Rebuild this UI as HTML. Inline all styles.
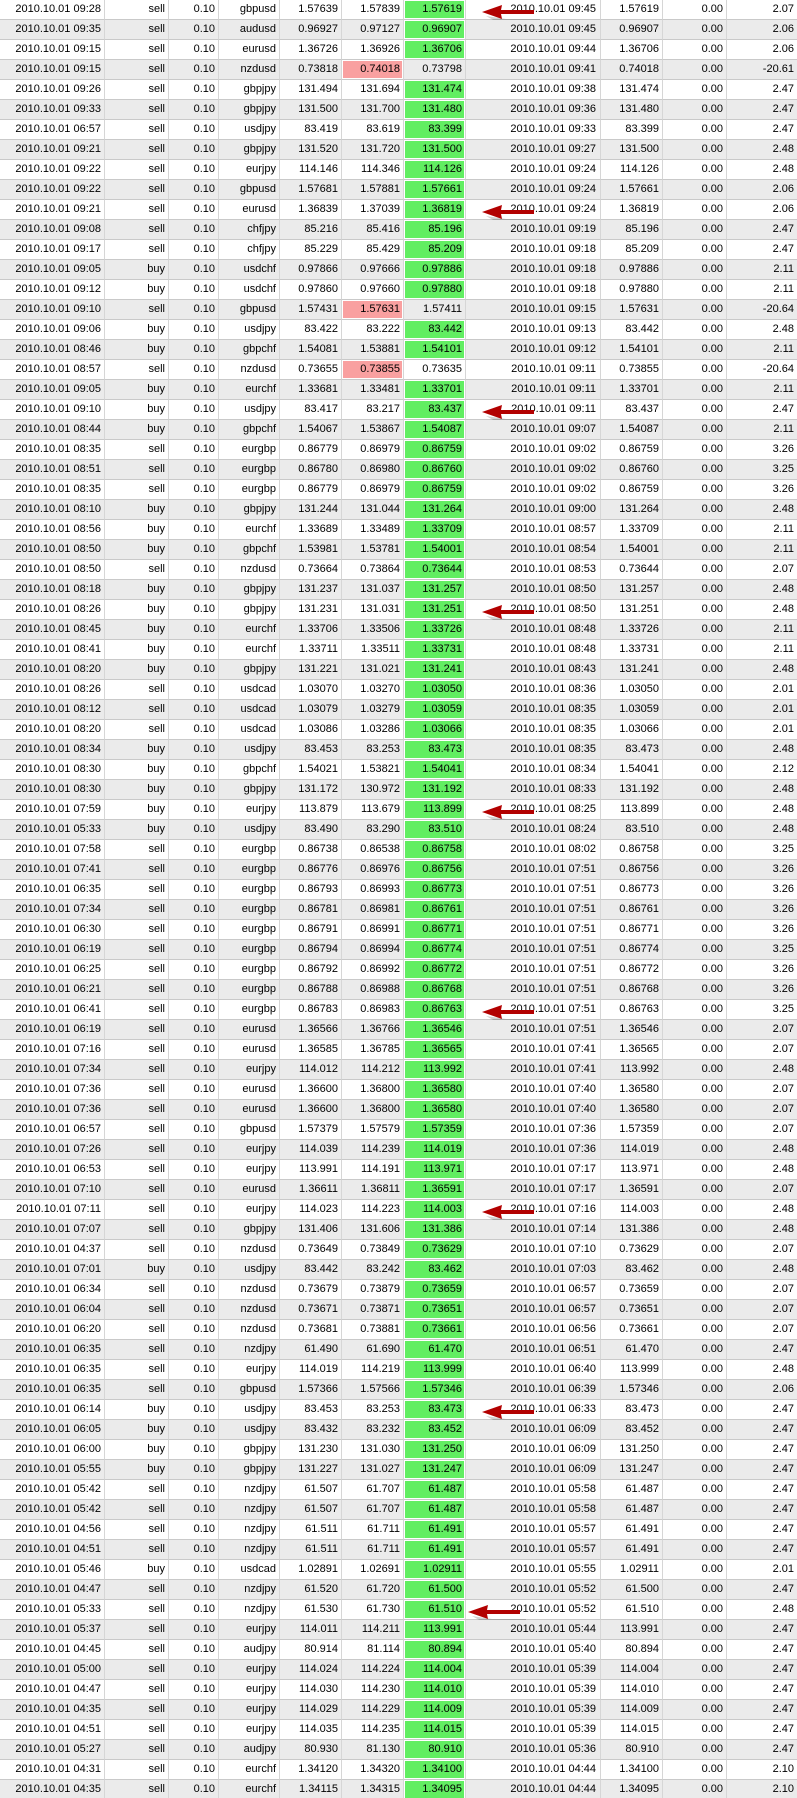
<!DOCTYPE html>
<html><head><meta charset="utf-8"><style>
html,body{margin:0;padding:0;background:#fff;width:797px;height:1798px;overflow:hidden;position:relative}
table{border-collapse:separate;border-spacing:0;table-layout:fixed;width:797px;font-family:"Liberation Sans",sans-serif;font-size:11px;color:#000}
td{height:19px;padding:0 3px 0 0;border-bottom:1px solid #c9c9c9;border-right:1px solid #d6d6d6;text-align:right;white-space:nowrap;overflow:hidden;line-height:19px}
td:last-child{border-right:none}
tr:nth-child(even) td{background:#ebebeb}
tr td.g{background:#61ee61 !important;box-shadow:inset 0 0 0 1px #fff}
tr td.r{background:#f9a0a0 !important;box-shadow:inset 0 0 0 1px #fff}
td:nth-child(8){padding-right:4px}
.a{position:absolute;left:476px;width:66px;height:16px}
</style></head><body>
<table>
<colgroup><col style="width:105px"><col style="width:64px"><col style="width:50px"><col style="width:61px"><col style="width:62px"><col style="width:62px"><col style="width:62px"><col style="width:135px"><col style="width:62px"><col style="width:64px"><col style="width:70px"></colgroup>
<tr><td>2010.10.01 09:28</td><td>sell</td><td>0.10</td><td>gbpusd</td><td>1.57639</td><td>1.57839</td><td class="g">1.57619</td><td>2010.10.01 09:45</td><td>1.57619</td><td>0.00</td><td>2.07</td></tr>
<tr><td>2010.10.01 09:35</td><td>sell</td><td>0.10</td><td>audusd</td><td>0.96927</td><td>0.97127</td><td class="g">0.96907</td><td>2010.10.01 09:45</td><td>0.96907</td><td>0.00</td><td>2.06</td></tr>
<tr><td>2010.10.01 09:15</td><td>sell</td><td>0.10</td><td>eurusd</td><td>1.36726</td><td>1.36926</td><td class="g">1.36706</td><td>2010.10.01 09:44</td><td>1.36706</td><td>0.00</td><td>2.06</td></tr>
<tr><td>2010.10.01 09:15</td><td>sell</td><td>0.10</td><td>nzdusd</td><td>0.73818</td><td class="r">0.74018</td><td>0.73798</td><td>2010.10.01 09:41</td><td>0.74018</td><td>0.00</td><td>-20.61</td></tr>
<tr><td>2010.10.01 09:26</td><td>sell</td><td>0.10</td><td>gbpjpy</td><td>131.494</td><td>131.694</td><td class="g">131.474</td><td>2010.10.01 09:38</td><td>131.474</td><td>0.00</td><td>2.47</td></tr>
<tr><td>2010.10.01 09:33</td><td>sell</td><td>0.10</td><td>gbpjpy</td><td>131.500</td><td>131.700</td><td class="g">131.480</td><td>2010.10.01 09:36</td><td>131.480</td><td>0.00</td><td>2.47</td></tr>
<tr><td>2010.10.01 06:57</td><td>sell</td><td>0.10</td><td>usdjpy</td><td>83.419</td><td>83.619</td><td class="g">83.399</td><td>2010.10.01 09:33</td><td>83.399</td><td>0.00</td><td>2.47</td></tr>
<tr><td>2010.10.01 09:21</td><td>sell</td><td>0.10</td><td>gbpjpy</td><td>131.520</td><td>131.720</td><td class="g">131.500</td><td>2010.10.01 09:27</td><td>131.500</td><td>0.00</td><td>2.48</td></tr>
<tr><td>2010.10.01 09:22</td><td>sell</td><td>0.10</td><td>eurjpy</td><td>114.146</td><td>114.346</td><td class="g">114.126</td><td>2010.10.01 09:24</td><td>114.126</td><td>0.00</td><td>2.48</td></tr>
<tr><td>2010.10.01 09:22</td><td>sell</td><td>0.10</td><td>gbpusd</td><td>1.57681</td><td>1.57881</td><td class="g">1.57661</td><td>2010.10.01 09:24</td><td>1.57661</td><td>0.00</td><td>2.06</td></tr>
<tr><td>2010.10.01 09:21</td><td>sell</td><td>0.10</td><td>eurusd</td><td>1.36839</td><td>1.37039</td><td class="g">1.36819</td><td>2010.10.01 09:24</td><td>1.36819</td><td>0.00</td><td>2.06</td></tr>
<tr><td>2010.10.01 09:08</td><td>sell</td><td>0.10</td><td>chfjpy</td><td>85.216</td><td>85.416</td><td class="g">85.196</td><td>2010.10.01 09:19</td><td>85.196</td><td>0.00</td><td>2.47</td></tr>
<tr><td>2010.10.01 09:17</td><td>sell</td><td>0.10</td><td>chfjpy</td><td>85.229</td><td>85.429</td><td class="g">85.209</td><td>2010.10.01 09:18</td><td>85.209</td><td>0.00</td><td>2.47</td></tr>
<tr><td>2010.10.01 09:05</td><td>buy</td><td>0.10</td><td>usdchf</td><td>0.97866</td><td>0.97666</td><td class="g">0.97886</td><td>2010.10.01 09:18</td><td>0.97886</td><td>0.00</td><td>2.11</td></tr>
<tr><td>2010.10.01 09:12</td><td>buy</td><td>0.10</td><td>usdchf</td><td>0.97860</td><td>0.97660</td><td class="g">0.97880</td><td>2010.10.01 09:18</td><td>0.97880</td><td>0.00</td><td>2.11</td></tr>
<tr><td>2010.10.01 09:10</td><td>sell</td><td>0.10</td><td>gbpusd</td><td>1.57431</td><td class="r">1.57631</td><td>1.57411</td><td>2010.10.01 09:15</td><td>1.57631</td><td>0.00</td><td>-20.64</td></tr>
<tr><td>2010.10.01 09:06</td><td>buy</td><td>0.10</td><td>usdjpy</td><td>83.422</td><td>83.222</td><td class="g">83.442</td><td>2010.10.01 09:13</td><td>83.442</td><td>0.00</td><td>2.48</td></tr>
<tr><td>2010.10.01 08:46</td><td>buy</td><td>0.10</td><td>gbpchf</td><td>1.54081</td><td>1.53881</td><td class="g">1.54101</td><td>2010.10.01 09:12</td><td>1.54101</td><td>0.00</td><td>2.11</td></tr>
<tr><td>2010.10.01 08:57</td><td>sell</td><td>0.10</td><td>nzdusd</td><td>0.73655</td><td class="r">0.73855</td><td>0.73635</td><td>2010.10.01 09:11</td><td>0.73855</td><td>0.00</td><td>-20.64</td></tr>
<tr><td>2010.10.01 09:05</td><td>buy</td><td>0.10</td><td>eurchf</td><td>1.33681</td><td>1.33481</td><td class="g">1.33701</td><td>2010.10.01 09:11</td><td>1.33701</td><td>0.00</td><td>2.11</td></tr>
<tr><td>2010.10.01 09:10</td><td>buy</td><td>0.10</td><td>usdjpy</td><td>83.417</td><td>83.217</td><td class="g">83.437</td><td>2010.10.01 09:11</td><td>83.437</td><td>0.00</td><td>2.47</td></tr>
<tr><td>2010.10.01 08:44</td><td>buy</td><td>0.10</td><td>gbpchf</td><td>1.54067</td><td>1.53867</td><td class="g">1.54087</td><td>2010.10.01 09:07</td><td>1.54087</td><td>0.00</td><td>2.11</td></tr>
<tr><td>2010.10.01 08:35</td><td>sell</td><td>0.10</td><td>eurgbp</td><td>0.86779</td><td>0.86979</td><td class="g">0.86759</td><td>2010.10.01 09:02</td><td>0.86759</td><td>0.00</td><td>3.26</td></tr>
<tr><td>2010.10.01 08:51</td><td>sell</td><td>0.10</td><td>eurgbp</td><td>0.86780</td><td>0.86980</td><td class="g">0.86760</td><td>2010.10.01 09:02</td><td>0.86760</td><td>0.00</td><td>3.25</td></tr>
<tr><td>2010.10.01 08:35</td><td>sell</td><td>0.10</td><td>eurgbp</td><td>0.86779</td><td>0.86979</td><td class="g">0.86759</td><td>2010.10.01 09:02</td><td>0.86759</td><td>0.00</td><td>3.26</td></tr>
<tr><td>2010.10.01 08:10</td><td>buy</td><td>0.10</td><td>gbpjpy</td><td>131.244</td><td>131.044</td><td class="g">131.264</td><td>2010.10.01 09:00</td><td>131.264</td><td>0.00</td><td>2.48</td></tr>
<tr><td>2010.10.01 08:56</td><td>buy</td><td>0.10</td><td>eurchf</td><td>1.33689</td><td>1.33489</td><td class="g">1.33709</td><td>2010.10.01 08:57</td><td>1.33709</td><td>0.00</td><td>2.11</td></tr>
<tr><td>2010.10.01 08:50</td><td>buy</td><td>0.10</td><td>gbpchf</td><td>1.53981</td><td>1.53781</td><td class="g">1.54001</td><td>2010.10.01 08:54</td><td>1.54001</td><td>0.00</td><td>2.11</td></tr>
<tr><td>2010.10.01 08:50</td><td>sell</td><td>0.10</td><td>nzdusd</td><td>0.73664</td><td>0.73864</td><td class="g">0.73644</td><td>2010.10.01 08:53</td><td>0.73644</td><td>0.00</td><td>2.07</td></tr>
<tr><td>2010.10.01 08:18</td><td>buy</td><td>0.10</td><td>gbpjpy</td><td>131.237</td><td>131.037</td><td class="g">131.257</td><td>2010.10.01 08:50</td><td>131.257</td><td>0.00</td><td>2.48</td></tr>
<tr><td>2010.10.01 08:26</td><td>buy</td><td>0.10</td><td>gbpjpy</td><td>131.231</td><td>131.031</td><td class="g">131.251</td><td>2010.10.01 08:50</td><td>131.251</td><td>0.00</td><td>2.48</td></tr>
<tr><td>2010.10.01 08:45</td><td>buy</td><td>0.10</td><td>eurchf</td><td>1.33706</td><td>1.33506</td><td class="g">1.33726</td><td>2010.10.01 08:48</td><td>1.33726</td><td>0.00</td><td>2.11</td></tr>
<tr><td>2010.10.01 08:41</td><td>buy</td><td>0.10</td><td>eurchf</td><td>1.33711</td><td>1.33511</td><td class="g">1.33731</td><td>2010.10.01 08:48</td><td>1.33731</td><td>0.00</td><td>2.11</td></tr>
<tr><td>2010.10.01 08:20</td><td>buy</td><td>0.10</td><td>gbpjpy</td><td>131.221</td><td>131.021</td><td class="g">131.241</td><td>2010.10.01 08:43</td><td>131.241</td><td>0.00</td><td>2.48</td></tr>
<tr><td>2010.10.01 08:26</td><td>sell</td><td>0.10</td><td>usdcad</td><td>1.03070</td><td>1.03270</td><td class="g">1.03050</td><td>2010.10.01 08:36</td><td>1.03050</td><td>0.00</td><td>2.01</td></tr>
<tr><td>2010.10.01 08:12</td><td>sell</td><td>0.10</td><td>usdcad</td><td>1.03079</td><td>1.03279</td><td class="g">1.03059</td><td>2010.10.01 08:35</td><td>1.03059</td><td>0.00</td><td>2.01</td></tr>
<tr><td>2010.10.01 08:20</td><td>sell</td><td>0.10</td><td>usdcad</td><td>1.03086</td><td>1.03286</td><td class="g">1.03066</td><td>2010.10.01 08:35</td><td>1.03066</td><td>0.00</td><td>2.01</td></tr>
<tr><td>2010.10.01 08:34</td><td>buy</td><td>0.10</td><td>usdjpy</td><td>83.453</td><td>83.253</td><td class="g">83.473</td><td>2010.10.01 08:35</td><td>83.473</td><td>0.00</td><td>2.48</td></tr>
<tr><td>2010.10.01 08:30</td><td>buy</td><td>0.10</td><td>gbpchf</td><td>1.54021</td><td>1.53821</td><td class="g">1.54041</td><td>2010.10.01 08:34</td><td>1.54041</td><td>0.00</td><td>2.12</td></tr>
<tr><td>2010.10.01 08:30</td><td>buy</td><td>0.10</td><td>gbpjpy</td><td>131.172</td><td>130.972</td><td class="g">131.192</td><td>2010.10.01 08:33</td><td>131.192</td><td>0.00</td><td>2.48</td></tr>
<tr><td>2010.10.01 07:59</td><td>buy</td><td>0.10</td><td>eurjpy</td><td>113.879</td><td>113.679</td><td class="g">113.899</td><td>2010.10.01 08:25</td><td>113.899</td><td>0.00</td><td>2.48</td></tr>
<tr><td>2010.10.01 05:33</td><td>buy</td><td>0.10</td><td>usdjpy</td><td>83.490</td><td>83.290</td><td class="g">83.510</td><td>2010.10.01 08:24</td><td>83.510</td><td>0.00</td><td>2.48</td></tr>
<tr><td>2010.10.01 07:58</td><td>sell</td><td>0.10</td><td>eurgbp</td><td>0.86738</td><td>0.86538</td><td class="g">0.86758</td><td>2010.10.01 08:02</td><td>0.86758</td><td>0.00</td><td>3.25</td></tr>
<tr><td>2010.10.01 07:41</td><td>sell</td><td>0.10</td><td>eurgbp</td><td>0.86776</td><td>0.86976</td><td class="g">0.86756</td><td>2010.10.01 07:51</td><td>0.86756</td><td>0.00</td><td>3.26</td></tr>
<tr><td>2010.10.01 06:35</td><td>sell</td><td>0.10</td><td>eurgbp</td><td>0.86793</td><td>0.86993</td><td class="g">0.86773</td><td>2010.10.01 07:51</td><td>0.86773</td><td>0.00</td><td>3.26</td></tr>
<tr><td>2010.10.01 07:34</td><td>sell</td><td>0.10</td><td>eurgbp</td><td>0.86781</td><td>0.86981</td><td class="g">0.86761</td><td>2010.10.01 07:51</td><td>0.86761</td><td>0.00</td><td>3.26</td></tr>
<tr><td>2010.10.01 06:30</td><td>sell</td><td>0.10</td><td>eurgbp</td><td>0.86791</td><td>0.86991</td><td class="g">0.86771</td><td>2010.10.01 07:51</td><td>0.86771</td><td>0.00</td><td>3.26</td></tr>
<tr><td>2010.10.01 06:19</td><td>sell</td><td>0.10</td><td>eurgbp</td><td>0.86794</td><td>0.86994</td><td class="g">0.86774</td><td>2010.10.01 07:51</td><td>0.86774</td><td>0.00</td><td>3.25</td></tr>
<tr><td>2010.10.01 06:25</td><td>sell</td><td>0.10</td><td>eurgbp</td><td>0.86792</td><td>0.86992</td><td class="g">0.86772</td><td>2010.10.01 07:51</td><td>0.86772</td><td>0.00</td><td>3.26</td></tr>
<tr><td>2010.10.01 06:21</td><td>sell</td><td>0.10</td><td>eurgbp</td><td>0.86788</td><td>0.86988</td><td class="g">0.86768</td><td>2010.10.01 07:51</td><td>0.86768</td><td>0.00</td><td>3.26</td></tr>
<tr><td>2010.10.01 06:41</td><td>sell</td><td>0.10</td><td>eurgbp</td><td>0.86783</td><td>0.86983</td><td class="g">0.86763</td><td>2010.10.01 07:51</td><td>0.86763</td><td>0.00</td><td>3.25</td></tr>
<tr><td>2010.10.01 06:19</td><td>sell</td><td>0.10</td><td>eurusd</td><td>1.36566</td><td>1.36766</td><td class="g">1.36546</td><td>2010.10.01 07:51</td><td>1.36546</td><td>0.00</td><td>2.07</td></tr>
<tr><td>2010.10.01 07:16</td><td>sell</td><td>0.10</td><td>eurusd</td><td>1.36585</td><td>1.36785</td><td class="g">1.36565</td><td>2010.10.01 07:41</td><td>1.36565</td><td>0.00</td><td>2.07</td></tr>
<tr><td>2010.10.01 07:34</td><td>sell</td><td>0.10</td><td>eurjpy</td><td>114.012</td><td>114.212</td><td class="g">113.992</td><td>2010.10.01 07:41</td><td>113.992</td><td>0.00</td><td>2.48</td></tr>
<tr><td>2010.10.01 07:36</td><td>sell</td><td>0.10</td><td>eurusd</td><td>1.36600</td><td>1.36800</td><td class="g">1.36580</td><td>2010.10.01 07:40</td><td>1.36580</td><td>0.00</td><td>2.07</td></tr>
<tr><td>2010.10.01 07:36</td><td>sell</td><td>0.10</td><td>eurusd</td><td>1.36600</td><td>1.36800</td><td class="g">1.36580</td><td>2010.10.01 07:40</td><td>1.36580</td><td>0.00</td><td>2.07</td></tr>
<tr><td>2010.10.01 06:57</td><td>sell</td><td>0.10</td><td>gbpusd</td><td>1.57379</td><td>1.57579</td><td class="g">1.57359</td><td>2010.10.01 07:36</td><td>1.57359</td><td>0.00</td><td>2.07</td></tr>
<tr><td>2010.10.01 07:26</td><td>sell</td><td>0.10</td><td>eurjpy</td><td>114.039</td><td>114.239</td><td class="g">114.019</td><td>2010.10.01 07:36</td><td>114.019</td><td>0.00</td><td>2.48</td></tr>
<tr><td>2010.10.01 06:53</td><td>sell</td><td>0.10</td><td>eurjpy</td><td>113.991</td><td>114.191</td><td class="g">113.971</td><td>2010.10.01 07:17</td><td>113.971</td><td>0.00</td><td>2.48</td></tr>
<tr><td>2010.10.01 07:10</td><td>sell</td><td>0.10</td><td>eurusd</td><td>1.36611</td><td>1.36811</td><td class="g">1.36591</td><td>2010.10.01 07:17</td><td>1.36591</td><td>0.00</td><td>2.07</td></tr>
<tr><td>2010.10.01 07:11</td><td>sell</td><td>0.10</td><td>eurjpy</td><td>114.023</td><td>114.223</td><td class="g">114.003</td><td>2010.10.01 07:16</td><td>114.003</td><td>0.00</td><td>2.48</td></tr>
<tr><td>2010.10.01 07:07</td><td>sell</td><td>0.10</td><td>gbpjpy</td><td>131.406</td><td>131.606</td><td class="g">131.386</td><td>2010.10.01 07:14</td><td>131.386</td><td>0.00</td><td>2.48</td></tr>
<tr><td>2010.10.01 04:37</td><td>sell</td><td>0.10</td><td>nzdusd</td><td>0.73649</td><td>0.73849</td><td class="g">0.73629</td><td>2010.10.01 07:10</td><td>0.73629</td><td>0.00</td><td>2.07</td></tr>
<tr><td>2010.10.01 07:01</td><td>buy</td><td>0.10</td><td>usdjpy</td><td>83.442</td><td>83.242</td><td class="g">83.462</td><td>2010.10.01 07:03</td><td>83.462</td><td>0.00</td><td>2.48</td></tr>
<tr><td>2010.10.01 06:34</td><td>sell</td><td>0.10</td><td>nzdusd</td><td>0.73679</td><td>0.73879</td><td class="g">0.73659</td><td>2010.10.01 06:57</td><td>0.73659</td><td>0.00</td><td>2.07</td></tr>
<tr><td>2010.10.01 06:04</td><td>sell</td><td>0.10</td><td>nzdusd</td><td>0.73671</td><td>0.73871</td><td class="g">0.73651</td><td>2010.10.01 06:57</td><td>0.73651</td><td>0.00</td><td>2.07</td></tr>
<tr><td>2010.10.01 06:20</td><td>sell</td><td>0.10</td><td>nzdusd</td><td>0.73681</td><td>0.73881</td><td class="g">0.73661</td><td>2010.10.01 06:56</td><td>0.73661</td><td>0.00</td><td>2.07</td></tr>
<tr><td>2010.10.01 06:35</td><td>sell</td><td>0.10</td><td>nzdjpy</td><td>61.490</td><td>61.690</td><td class="g">61.470</td><td>2010.10.01 06:51</td><td>61.470</td><td>0.00</td><td>2.47</td></tr>
<tr><td>2010.10.01 06:35</td><td>sell</td><td>0.10</td><td>eurjpy</td><td>114.019</td><td>114.219</td><td class="g">113.999</td><td>2010.10.01 06:40</td><td>113.999</td><td>0.00</td><td>2.48</td></tr>
<tr><td>2010.10.01 06:35</td><td>sell</td><td>0.10</td><td>gbpusd</td><td>1.57366</td><td>1.57566</td><td class="g">1.57346</td><td>2010.10.01 06:39</td><td>1.57346</td><td>0.00</td><td>2.06</td></tr>
<tr><td>2010.10.01 06:14</td><td>buy</td><td>0.10</td><td>usdjpy</td><td>83.453</td><td>83.253</td><td class="g">83.473</td><td>2010.10.01 06:33</td><td>83.473</td><td>0.00</td><td>2.47</td></tr>
<tr><td>2010.10.01 06:05</td><td>buy</td><td>0.10</td><td>usdjpy</td><td>83.432</td><td>83.232</td><td class="g">83.452</td><td>2010.10.01 06:09</td><td>83.452</td><td>0.00</td><td>2.47</td></tr>
<tr><td>2010.10.01 06:00</td><td>buy</td><td>0.10</td><td>gbpjpy</td><td>131.230</td><td>131.030</td><td class="g">131.250</td><td>2010.10.01 06:09</td><td>131.250</td><td>0.00</td><td>2.47</td></tr>
<tr><td>2010.10.01 05:55</td><td>buy</td><td>0.10</td><td>gbpjpy</td><td>131.227</td><td>131.027</td><td class="g">131.247</td><td>2010.10.01 06:09</td><td>131.247</td><td>0.00</td><td>2.47</td></tr>
<tr><td>2010.10.01 05:42</td><td>sell</td><td>0.10</td><td>nzdjpy</td><td>61.507</td><td>61.707</td><td class="g">61.487</td><td>2010.10.01 05:58</td><td>61.487</td><td>0.00</td><td>2.47</td></tr>
<tr><td>2010.10.01 05:42</td><td>sell</td><td>0.10</td><td>nzdjpy</td><td>61.507</td><td>61.707</td><td class="g">61.487</td><td>2010.10.01 05:58</td><td>61.487</td><td>0.00</td><td>2.47</td></tr>
<tr><td>2010.10.01 04:56</td><td>sell</td><td>0.10</td><td>nzdjpy</td><td>61.511</td><td>61.711</td><td class="g">61.491</td><td>2010.10.01 05:57</td><td>61.491</td><td>0.00</td><td>2.47</td></tr>
<tr><td>2010.10.01 04:51</td><td>sell</td><td>0.10</td><td>nzdjpy</td><td>61.511</td><td>61.711</td><td class="g">61.491</td><td>2010.10.01 05:57</td><td>61.491</td><td>0.00</td><td>2.47</td></tr>
<tr><td>2010.10.01 05:46</td><td>buy</td><td>0.10</td><td>usdcad</td><td>1.02891</td><td>1.02691</td><td class="g">1.02911</td><td>2010.10.01 05:55</td><td>1.02911</td><td>0.00</td><td>2.01</td></tr>
<tr><td>2010.10.01 04:47</td><td>sell</td><td>0.10</td><td>nzdjpy</td><td>61.520</td><td>61.720</td><td class="g">61.500</td><td>2010.10.01 05:52</td><td>61.500</td><td>0.00</td><td>2.47</td></tr>
<tr><td>2010.10.01 05:33</td><td>sell</td><td>0.10</td><td>nzdjpy</td><td>61.530</td><td>61.730</td><td class="g">61.510</td><td>2010.10.01 05:52</td><td>61.510</td><td>0.00</td><td>2.48</td></tr>
<tr><td>2010.10.01 05:37</td><td>sell</td><td>0.10</td><td>eurjpy</td><td>114.011</td><td>114.211</td><td class="g">113.991</td><td>2010.10.01 05:44</td><td>113.991</td><td>0.00</td><td>2.47</td></tr>
<tr><td>2010.10.01 04:45</td><td>sell</td><td>0.10</td><td>audjpy</td><td>80.914</td><td>81.114</td><td class="g">80.894</td><td>2010.10.01 05:40</td><td>80.894</td><td>0.00</td><td>2.47</td></tr>
<tr><td>2010.10.01 05:00</td><td>sell</td><td>0.10</td><td>eurjpy</td><td>114.024</td><td>114.224</td><td class="g">114.004</td><td>2010.10.01 05:39</td><td>114.004</td><td>0.00</td><td>2.47</td></tr>
<tr><td>2010.10.01 04:47</td><td>sell</td><td>0.10</td><td>eurjpy</td><td>114.030</td><td>114.230</td><td class="g">114.010</td><td>2010.10.01 05:39</td><td>114.010</td><td>0.00</td><td>2.47</td></tr>
<tr><td>2010.10.01 04:35</td><td>sell</td><td>0.10</td><td>eurjpy</td><td>114.029</td><td>114.229</td><td class="g">114.009</td><td>2010.10.01 05:39</td><td>114.009</td><td>0.00</td><td>2.47</td></tr>
<tr><td>2010.10.01 04:51</td><td>sell</td><td>0.10</td><td>eurjpy</td><td>114.035</td><td>114.235</td><td class="g">114.015</td><td>2010.10.01 05:39</td><td>114.015</td><td>0.00</td><td>2.47</td></tr>
<tr><td>2010.10.01 05:27</td><td>sell</td><td>0.10</td><td>audjpy</td><td>80.930</td><td>81.130</td><td class="g">80.910</td><td>2010.10.01 05:36</td><td>80.910</td><td>0.00</td><td>2.47</td></tr>
<tr><td>2010.10.01 04:31</td><td>sell</td><td>0.10</td><td>eurchf</td><td>1.34120</td><td>1.34320</td><td class="g">1.34100</td><td>2010.10.01 04:44</td><td>1.34100</td><td>0.00</td><td>2.10</td></tr>
<tr><td>2010.10.01 04:35</td><td>sell</td><td>0.10</td><td>eurchf</td><td>1.34115</td><td>1.34315</td><td class="g">1.34095</td><td>2010.10.01 04:44</td><td>1.34095</td><td>0.00</td><td>2.10</td></tr>
</table>
<svg width="0" height="0" style="position:absolute"><defs><g id="ar"><path d="M8 10 L28 13 L62 13 L62 18 L28 18 L26 20 Z" fill="#000" opacity=".18" transform="translate(2,2)"/><path d="M6 8 L26 1 L25 6 L58 6 L58 10 L25 10 L26 15 Z" fill="#b20000"/></g></defs></svg>
<svg class="a" style="top:4px" viewBox="0 0 66 16"><use href="#ar"/></svg>
<svg class="a" style="top:204px" viewBox="0 0 66 16"><use href="#ar"/></svg>
<svg class="a" style="top:404px" viewBox="0 0 66 16"><use href="#ar"/></svg>
<svg class="a" style="top:604px" viewBox="0 0 66 16"><use href="#ar"/></svg>
<svg class="a" style="top:804px" viewBox="0 0 66 16"><use href="#ar"/></svg>
<svg class="a" style="top:1004px" viewBox="0 0 66 16"><use href="#ar"/></svg>
<svg class="a" style="top:1204px" viewBox="0 0 66 16"><use href="#ar"/></svg>
<svg class="a" style="top:1404px" viewBox="0 0 66 16"><use href="#ar"/></svg>
<svg class="a" style="top:1604px;left:462px" viewBox="0 0 66 16"><use href="#ar"/></svg>
</body></html>
